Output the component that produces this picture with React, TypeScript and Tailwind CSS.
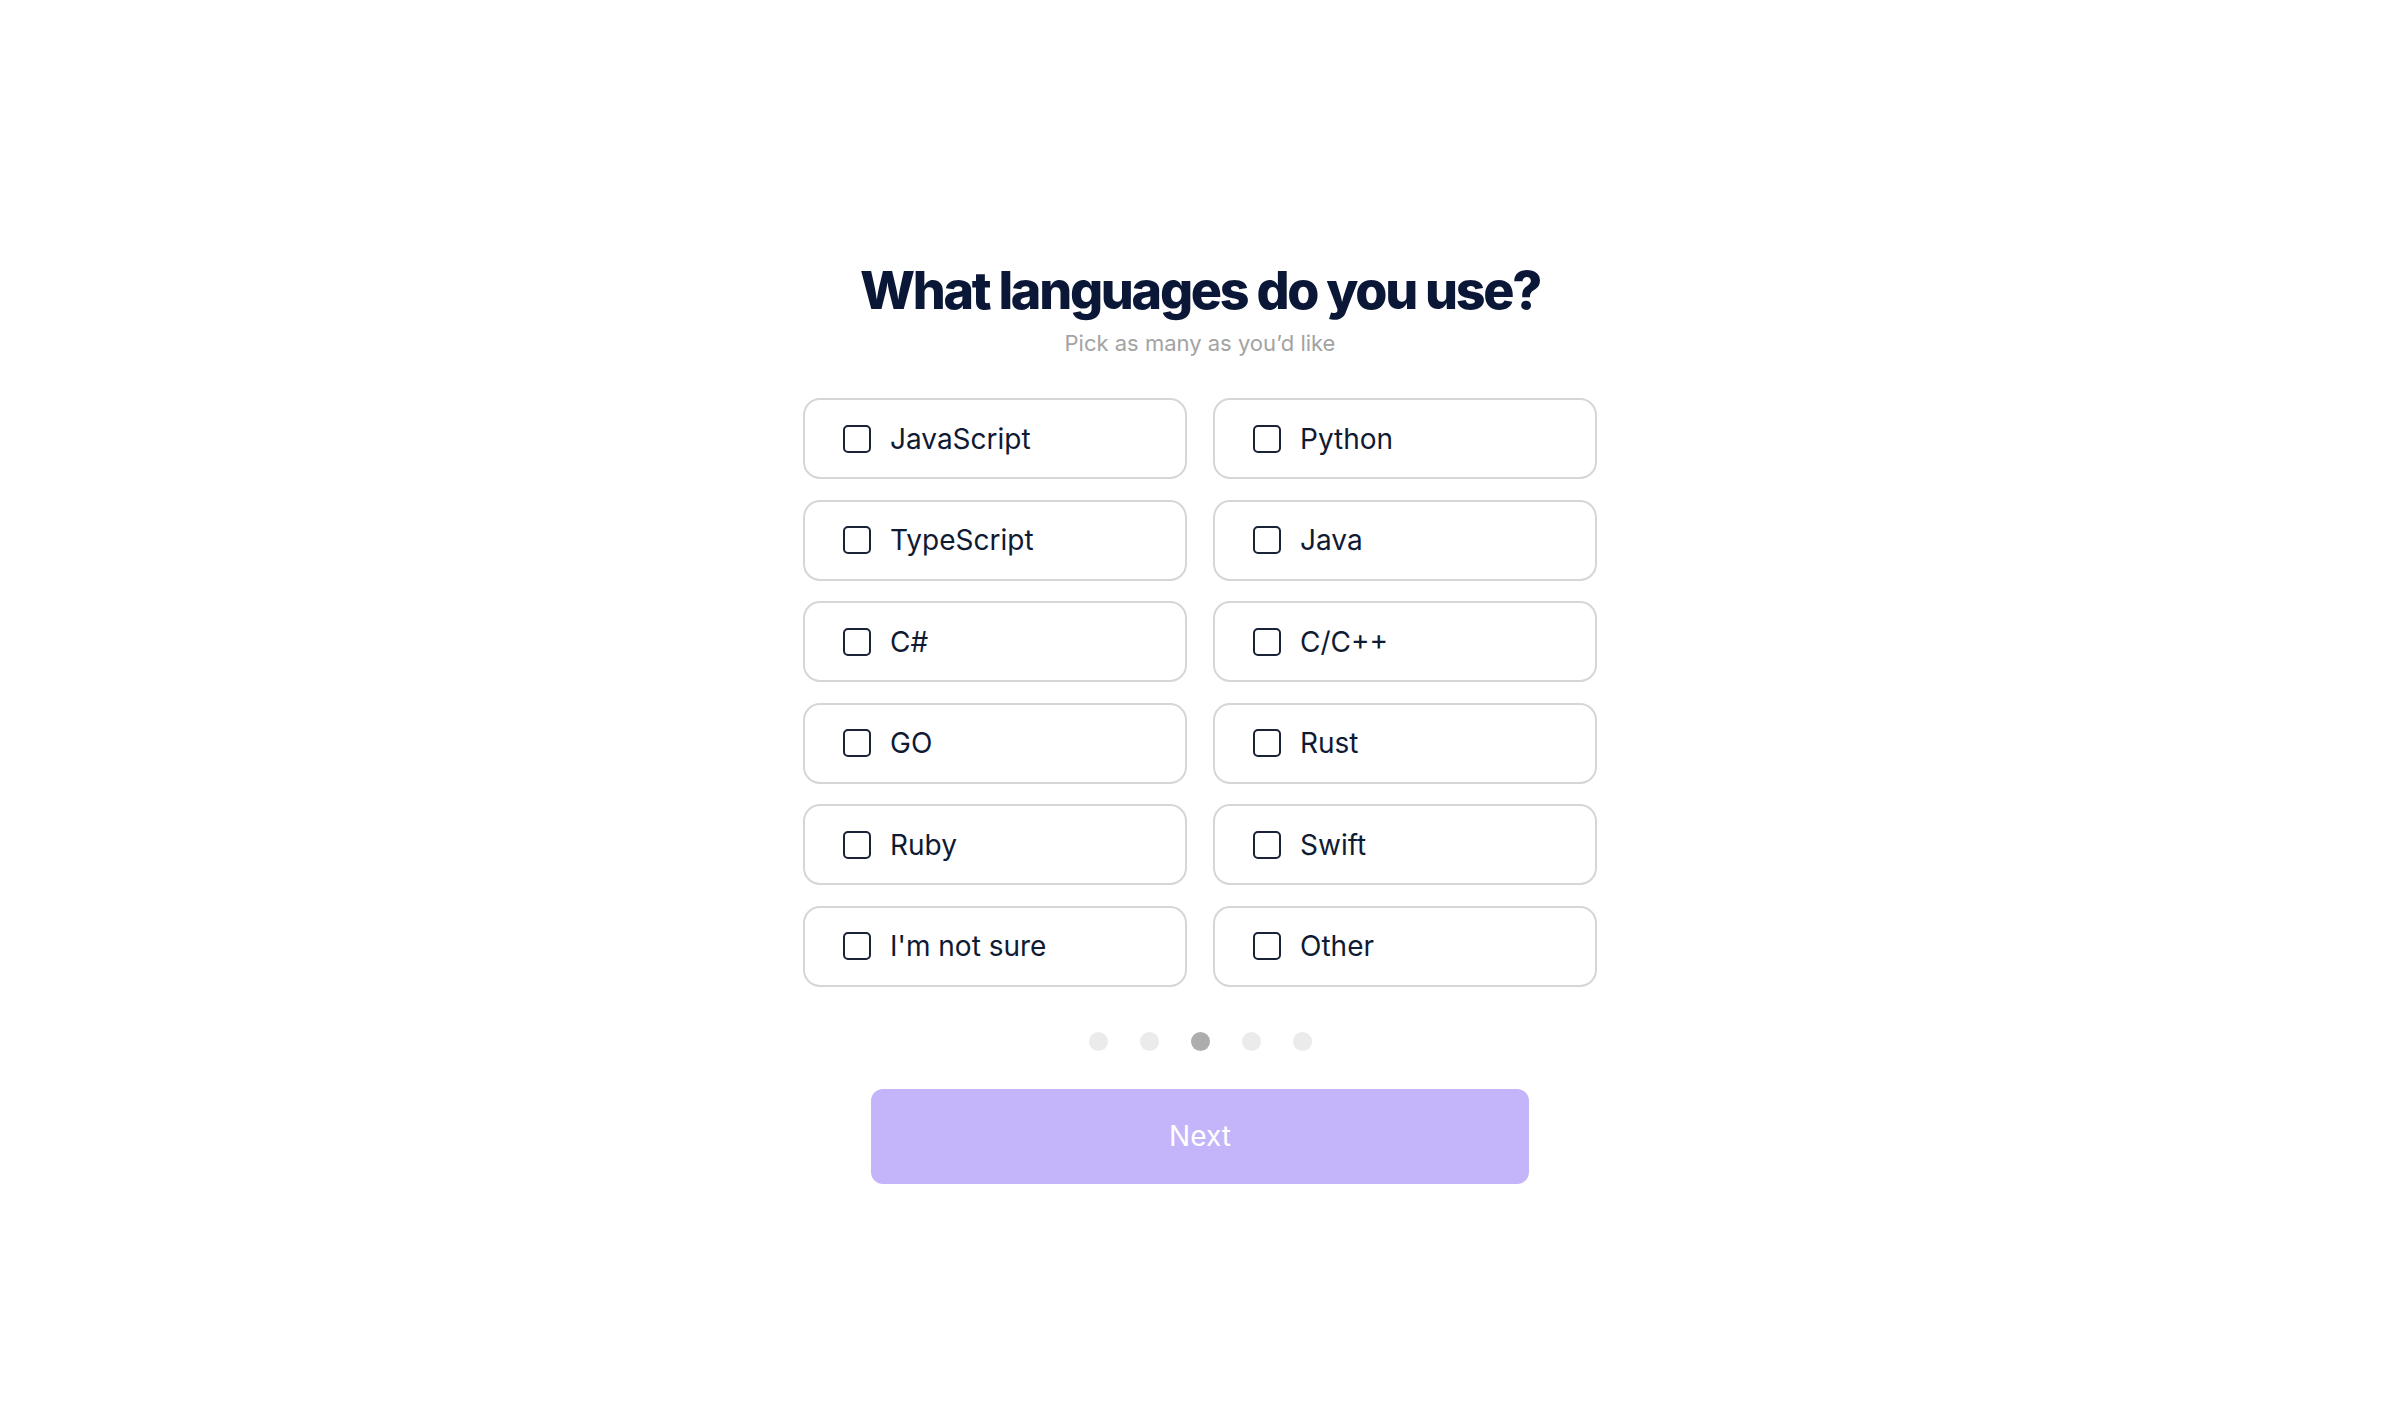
const languages = [
  "JavaScript",
  "Python",
  "TypeScript",
  "Java",
  "C#",
  "C/C++",
  "GO",
  "Rust",
  "Ruby",
  "Swift",
  "I'm not sure",
  "Other",
];

function Option({ label }: { label: string }) {
  return (
    <label className="flex h-[81px] cursor-pointer items-center gap-[19px] rounded-[17px] border-2 border-[#d6d6d6] bg-white pl-[38px]">
      <span className="h-[28px] w-[28px] shrink-0 rounded-[5px] border-2 border-[#1a2238]" />
      <span className="text-[28px] leading-none text-[#0f1a33]">{label}</span>
    </label>
  );
}

export default function App() {
  const step = 2;
  return (
    <div
      className="flex min-h-screen flex-col items-center bg-white pt-[265px]"
      style={{ fontFamily: "Inter, 'Noto Sans', sans-serif" }}
    >
      <h1 className="text-[52px] leading-[52px] font-extrabold tracking-[-0.044em] text-[#0b1736]">
        What languages do you use?
      </h1>
      <p className="mt-[12px] text-[22px] leading-[28px] text-[#a3a3a3]">
        Pick as many as you’d like
      </p>

      <div className="mt-[41px] grid w-[794px] grid-cols-2 gap-x-[26px] gap-y-[20.5px]">
        {languages.map((l) => (
          <Option key={l} label={l} />
        ))}
      </div>

      <div className="mt-[45px] flex gap-[32px]">
        {[0, 1, 2, 3, 4].map((i) => (
          <span
            key={i}
            className={
              i === step
                ? "h-[19px] w-[19px] rounded-full bg-[#adadad]"
                : "h-[19px] w-[19px] rounded-full bg-[#ebebeb]"
            }
          />
        ))}
      </div>

      <button className="mt-[38px] flex h-[95px] w-[658px] items-center justify-center rounded-[12px] bg-[#c4b5fa] text-[28px] text-white">
        Next
      </button>
    </div>
  );
}
